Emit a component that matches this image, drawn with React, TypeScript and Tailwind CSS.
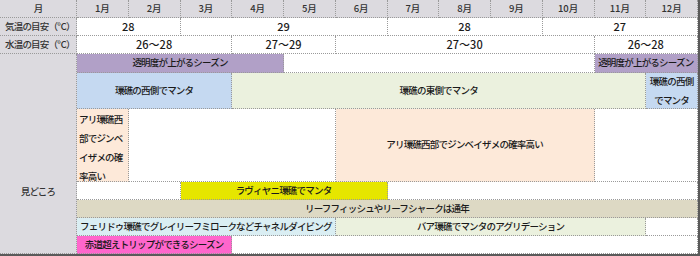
import type { ReactNode } from "react"

const months = ["1月", "2月", "3月", "4月", "5月", "6月", "7月", "8月", "9月", "10月", "11月", "12月"]

const cell = "flex items-center justify-center border-r border-b border-dotted border-[#9a9a9a] overflow-hidden whitespace-nowrap"
const label = "bg-[#dcdadf] text-[#333]"

function Cell({ className, children }: { className: string; children?: ReactNode }) {
  return <div className={`${cell} ${className}`}>{children}</div>
}

export default function App() {
  return (
    <div className="h-[256px] w-[700px] overflow-hidden bg-white">
      <div
        className="grid w-[700px] grid-cols-[77px_repeat(12,minmax(0,1fr))] grid-rows-[18px_18px_18px_19px_36px_73px_18px_18px_18px_18px] border-r-2 border-b-2 border-[#5a5a5a] text-[9.5px] font-medium leading-none tracking-[-0.8px] text-[#1a1a1a]"
        style={{ fontFamily: '"Noto Sans CJK JP", "Noto Sans", sans-serif' }}
      >
        {/* 月 */}
        <Cell className={label}>月</Cell>
        {months.map((m) => (
          <Cell key={m} className={`${label} tracking-normal`}>
            {m}
          </Cell>
        ))}

        {/* 気温 */}
        <Cell className={`${label} justify-start pl-[5px]`}>気温の目安（℃）</Cell>
        <Cell className="col-span-2 text-[11px] tracking-normal">28</Cell>
        <Cell className="col-span-4 text-[11px] tracking-normal">29</Cell>
        <Cell className="col-span-3 text-[11px] tracking-normal">28</Cell>
        <Cell className="col-span-3 text-[11px] tracking-normal">27</Cell>

        {/* 水温 */}
        <Cell className={`${label} justify-start pl-[5px]`}>水温の目安（℃）</Cell>
        <Cell className="col-span-3 text-[11px] tracking-normal">26～28</Cell>
        <Cell className="col-span-2 text-[11px] tracking-normal">27～29</Cell>
        <Cell className="col-span-5 text-[11px] tracking-normal">27～30</Cell>
        <Cell className="col-span-2 text-[11px] tracking-normal">26～28</Cell>

        {/* 見どころ */}
        <div className={`${label} row-span-7 flex justify-center border-r border-b border-dotted border-[#9a9a9a] pt-[133px]`}>
          見どころ
        </div>

        <Cell className="col-span-4 bg-[#b1a0c7]">透明度が上がるシーズン</Cell>
        <Cell className="col-span-6" />
        <Cell className="col-span-2 bg-[#b1a0c7]">透明度が上がるシーズン</Cell>

        <Cell className="col-span-3 bg-[#c5d9f1]">環礁の西側でマンタ</Cell>
        <Cell className="col-span-8 bg-[#ebf1de]">環礁の東側でマンタ</Cell>
        <Cell className="flex-col bg-[#c5d9f1] leading-[19px]">
          <span>環礁の西側</span>
          <span>でマンタ</span>
        </Cell>

        <div className="flex flex-col items-start border-r border-b border-dotted border-[#9a9a9a] bg-[#fde9d9] pl-[2px] pt-px leading-[19px]">
          <span>アリ環礁西</span>
          <span>部でジンベ</span>
          <span>イザメの確</span>
          <span>率高い</span>
        </div>
        <Cell className="col-span-4" />
        <Cell className="col-span-5 bg-[#fde9d9]">アリ環礁西部でジンベイザメの確率高い</Cell>
        <Cell className="col-span-2" />

        <Cell className="col-span-2" />
        <Cell className="col-span-4 bg-[#e6e600]">ラヴィヤニ環礁でマンタ</Cell>
        <Cell className="col-span-6" />

        <Cell className="col-span-12 bg-[#ddd9c4]">リーフフィッシュやリーフシャークは通年</Cell>

        <Cell className="col-span-5 bg-[#daeef3]">フェリドゥ環礁でグレイリーフミロークなどチャネルダイビング</Cell>
        <Cell className="col-span-6 bg-[#ebf1de]">バア環礁でマンタのアグリデーション</Cell>
        <Cell className="" />

        <Cell className="col-span-3 bg-[#ff66cc]">赤道超えトリップができるシーズン</Cell>
        <Cell className="col-span-9" />
      </div>
    </div>
  )
}
